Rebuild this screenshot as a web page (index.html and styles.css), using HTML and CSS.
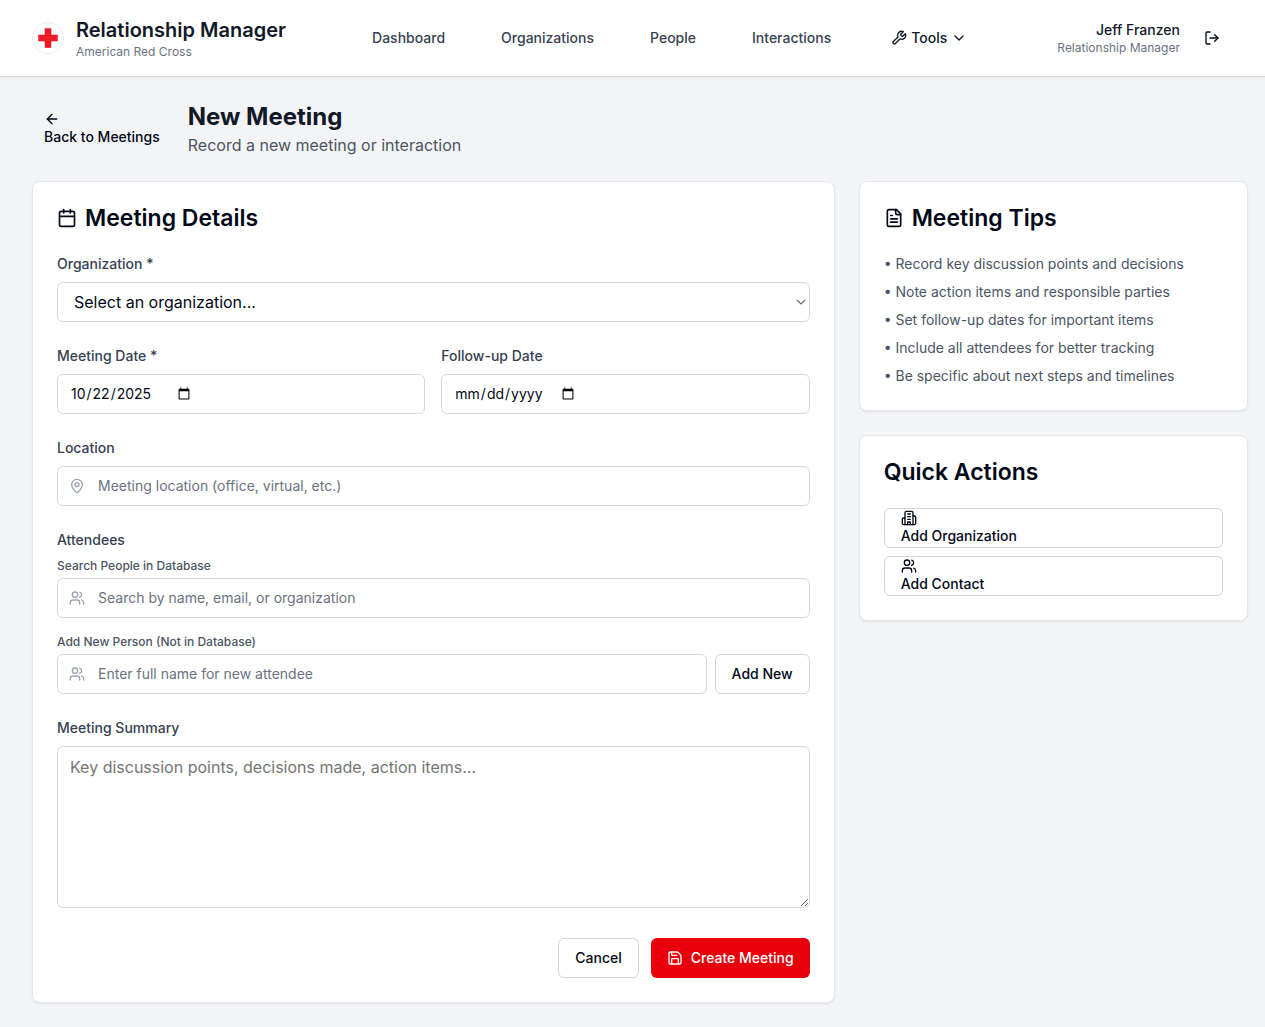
FILE: index.html
```html
<!DOCTYPE html>
<html lang="en">
<head>
<meta charset="utf-8">
<meta name="viewport" content="width=device-width, initial-scale=1">
<title>New Meeting - Relationship Manager</title>
<link rel="stylesheet" href="styles.css">
</head>
<body>
<svg class="sprite" aria-hidden="true">
  <symbol id="users" viewBox="0 0 24 24"><path d="M16 21v-2a4 4 0 0 0-4-4H6a4 4 0 0 0-4 4v2"/><circle cx="9" cy="7" r="4"/><path d="M22 21v-2a4 4 0 0 0-3-3.87"/><path d="M16 3.13a4 4 0 0 1 0 7.75"/></symbol>
</svg>

<header class="topbar">
  <div class="brand">
    <svg class="logo" viewBox="0 0 32 32" aria-hidden="true"><circle cx="16" cy="16" r="15.5" fill="#fff" stroke="#ececee"/><path fill="#ed1b24" d="M12.7 6.3h6.6v6.4h6.4v6.6h-6.4v6.4h-6.6v-6.4H6.3v-6.6h6.4z"/></svg>
    <div>
      <div class="brand-name">Relationship Manager</div>
      <div class="caption">American Red Cross</div>
    </div>
  </div>
  <nav class="nav">
    <a class="nav-link" href="#">Dashboard</a>
    <a class="nav-link" href="#">Organizations</a>
    <a class="nav-link" href="#">People</a>
    <a class="nav-link" href="#">Interactions</a>
    <button class="tools" type="button">
      <svg class="icon" viewBox="0 0 24 24"><path d="M14.7 6.3a1 1 0 0 0 0 1.4l1.6 1.6a1 1 0 0 0 1.4 0l3.77-3.77a6 6 0 0 1-7.94 7.94l-6.91 6.91a2.12 2.12 0 0 1-3-3l6.91-6.91a6 6 0 0 1 7.94-7.94l-3.76 3.76z"/></svg>
      <span>Tools</span>
      <svg class="icon" viewBox="0 0 24 24"><path d="m6 9 6 6 6-6"/></svg>
    </button>
  </nav>
  <div class="account">
    <div class="account-text">
      <div class="account-name">Jeff Franzen</div>
      <div class="caption">Relationship Manager</div>
    </div>
    <button class="logout" type="button" aria-label="Log out">
      <svg class="icon" viewBox="0 0 24 24"><path d="M9 21H5a2 2 0 0 1-2-2V5a2 2 0 0 1 2-2h4"/><path d="m16 17 5-5-5-5"/><path d="M21 12H9"/></svg>
    </button>
  </div>
</header>

<main class="page">
  <div class="page-head">
    <a class="back" href="#">
      <svg class="icon" viewBox="0 0 24 24"><path d="m12 19-7-7 7-7"/><path d="M19 12H5"/></svg>
      <span>Back to Meetings</span>
    </a>
    <div>
      <h1 class="page-title">New Meeting</h1>
      <p class="page-sub">Record a new meeting or interaction</p>
    </div>
  </div>

  <div class="columns">
    <section class="card">
      <h2 class="card-title">
        <svg class="icon icon-lg" viewBox="0 0 24 24"><path d="M8 2v4"/><path d="M16 2v4"/><rect width="18" height="18" x="3" y="4" rx="2"/><path d="M3 10h18"/></svg>
        Meeting Details
      </h2>
      <form class="form">
        <div class="field">
          <label class="label" for="org">Organization *</label>
          <div class="select-wrap">
            <select class="control select" id="org"><option>Select an organization...</option></select>
            <svg class="select-arrow" viewBox="0 0 10 6" aria-hidden="true"><path d="m1 1 4 4 4-4"/></svg>
          </div>
        </div>
        <div class="pair">
          <div class="field">
            <label class="label" for="date">Meeting Date *</label>
            <input class="control date" type="date" id="date" value="2025-10-22">
          </div>
          <div class="field">
            <label class="label" for="follow">Follow-up Date</label>
            <input class="control date" type="date" id="follow">
          </div>
        </div>
        <div class="field">
          <label class="label" for="location">Location</label>
          <div class="with-icon">
            <svg class="icon" viewBox="0 0 24 24"><path d="M20 10c0 4.993-5.539 10.193-7.399 11.799a1 1 0 0 1-1.202 0C9.539 20.193 4 14.993 4 10a8 8 0 0 1 16 0"/><circle cx="12" cy="10" r="3"/></svg>
            <input class="control" type="text" id="location" placeholder="Meeting location (office, virtual, etc.)">
          </div>
        </div>
        <fieldset class="attendees">
          <legend class="label">Attendees</legend>
          <div class="subfield">
            <label class="sublabel" for="search">Search People in Database</label>
            <div class="with-icon">
              <svg class="icon"><use href="#users"/></svg>
              <input class="control" type="text" id="search" placeholder="Search by name, email, or organization">
            </div>
          </div>
          <div class="subfield">
            <label class="sublabel" for="person">Add New Person (Not in Database)</label>
            <div class="add-row">
              <div class="with-icon">
                <svg class="icon"><use href="#users"/></svg>
                <input class="control" type="text" id="person" placeholder="Enter full name for new attendee">
              </div>
              <button class="btn" type="button">Add New</button>
            </div>
          </div>
        </fieldset>
        <div class="field">
          <label class="label" for="summary">Meeting Summary</label>
          <textarea class="summary" id="summary" rows="6" placeholder="Key discussion points, decisions made, action items..."></textarea>
        </div>
        <div class="actions">
          <button class="btn" type="button">Cancel</button>
          <button class="btn btn-primary" type="submit">
            <svg class="icon" viewBox="0 0 24 24"><path d="M15.2 3a2 2 0 0 1 1.4.6l3.8 3.8a2 2 0 0 1 .6 1.4V19a2 2 0 0 1-2 2H5a2 2 0 0 1-2-2V5a2 2 0 0 1 2-2z"/><path d="M17 21v-7a1 1 0 0 0-1-1H8a1 1 0 0 0-1 1v7"/><path d="M7 3v4a1 1 0 0 0 1 1h7"/></svg>
            Create Meeting
          </button>
        </div>
      </form>
    </section>

    <aside class="side">
      <section class="card">
        <h2 class="card-title">
          <svg class="icon icon-lg" viewBox="0 0 24 24"><path d="M15 2H6a2 2 0 0 0-2 2v16a2 2 0 0 0 2 2h12a2 2 0 0 0 2-2V7Z"/><path d="M14 2v4a2 2 0 0 0 2 2h4"/><path d="M10 9H8"/><path d="M16 13H8"/><path d="M16 17H8"/></svg>
          Meeting Tips
        </h2>
        <ul class="tips">
          <li>• Record key discussion points and decisions</li>
          <li>• Note action items and responsible parties</li>
          <li>• Set follow-up dates for important items</li>
          <li>• Include all attendees for better tracking</li>
          <li>• Be specific about next steps and timelines</li>
        </ul>
      </section>
      <section class="card">
        <h2 class="card-title">Quick Actions</h2>
        <div class="quick">
          <button class="quick-btn" type="button">
            <svg class="icon" viewBox="0 0 24 24"><path d="M6 22V4a2 2 0 0 1 2-2h8a2 2 0 0 1 2 2v18Z"/><path d="M6 12H4a2 2 0 0 0-2 2v6a2 2 0 0 0 2 2h2"/><path d="M18 9h2a2 2 0 0 1 2 2v9a2 2 0 0 1-2 2h-2"/><path d="M10 6h4"/><path d="M10 10h4"/><path d="M10 14h4"/><path d="M10 22v-4h4v4"/></svg>
            <span>Add Organization</span>
          </button>
          <button class="quick-btn" type="button">
            <svg class="icon"><use href="#users"/></svg>
            <span>Add Contact</span>
          </button>
        </div>
      </section>
    </aside>
  </div>
</main>
</body>
</html>
```
FILE: styles.css
```css
*, *::before, *::after { box-sizing: border-box; }

body {
  margin: 0;
  background: #f3f4f6;
  color: #020817;
  font: 14px/20px Inter, "Liberation Sans", sans-serif;
}

h1, h2, p, ul { margin: 0; padding: 0; }
a { color: inherit; text-decoration: none; }
button, input, select, textarea { font: inherit; color: inherit; margin: 0; }
button { cursor: pointer; }

.sprite { display: none; }

.icon {
  display: block;
  flex: none;
  width: 16px;
  height: 16px;
  fill: none;
  stroke: currentColor;
  stroke-width: 2;
  stroke-linecap: round;
  stroke-linejoin: round;
}
.icon-lg { width: 20px; height: 20px; }

/* Top bar */
.topbar {
  display: flex;
  align-items: center;
  justify-content: space-between;
  padding: 16px 33px 16px 32px;
  background: #fff;
  border-bottom: 1px solid #d9dce1;
  box-shadow: 0 1px 2px rgba(0, 0, 0, 0.06);
}
.brand { display: flex; align-items: center; gap: 12px; }
.logo { display: block; width: 32px; height: 32px; }
.brand-name { font-size: 20px; line-height: 28px; font-weight: 600; color: #111827; }
.caption { font-size: 12px; line-height: 16px; color: #6b7280; }

.nav { display: flex; align-items: center; gap: 32px; font-weight: 500; }
.nav-link { padding: 8px 12px; color: #374151; }
.tools {
  display: flex;
  align-items: center;
  gap: 4px;
  padding: 0 16px;
  border: 0;
  background: none;
  color: #111827;
}

.account { display: flex; align-items: center; gap: 12px; }
.account-text { text-align: right; }
.account-name { font-weight: 500; color: #111827; }
.logout { padding: 12px; border: 0; background: none; }

/* Page heading */
.page { padding: 24px 17px 24px 32px; }
.page-head { display: flex; align-items: center; gap: 16px; margin-bottom: 24px; }
.back { padding: 0 12px; font-weight: 500; }
.page-title { font-size: 24px; line-height: 32px; font-weight: 700; color: #111827; }
.page-sub { font-size: 16px; line-height: 24px; color: #4b5563; }

/* Cards */
.columns { display: grid; grid-template-columns: repeat(3, minmax(0, 1fr)); gap: 24px; align-items: start; }
.columns > .card { grid-column: span 2; }
.side { display: grid; gap: 24px; }
.card {
  padding: 24px;
  background: #fff;
  border: 1px solid #e5e7eb;
  border-radius: 8px;
  box-shadow: 0 1px 2px rgba(0, 0, 0, 0.08);
}
.card-title {
  display: flex;
  align-items: center;
  gap: 8px;
  margin-bottom: 24px;
  font-size: 23px;
  line-height: 24px;
  font-weight: 600;
}

/* Form */
.form { display: grid; gap: 24px; }
.field { display: grid; gap: 8px; }
.pair { display: grid; grid-template-columns: 1fr 1fr; gap: 16px; }
.label { padding: 0; font-weight: 500; color: #374151; }
.sublabel { font-size: 12px; line-height: 16px; font-weight: 500; color: #4b5563; }
.subfield { display: grid; gap: 4px; }

.control, .summary {
  display: flex;
  width: 100%;
  background: #fff;
  border: 1px solid #d5d8df;
  border-radius: 6px;
  padding: 8px 12px;
}
.control { height: 40px; }
.control::placeholder { color: #6b7280; opacity: 1; }
.date::-webkit-calendar-picker-indicator { margin-left: -3px; }

.select-wrap { position: relative; }
.select { appearance: none; font-size: 16px; line-height: 24px; padding: 0 16px; }
.select-arrow {
  position: absolute;
  right: 4px;
  top: 17px;
  width: 10px;
  height: 6px;
  fill: none;
  stroke: #6b6b70;
  stroke-width: 1.2;
  pointer-events: none;
}

.with-icon { position: relative; flex: 1; }
.with-icon .icon { position: absolute; left: 12px; top: 12px; color: #9ca3af; }
.with-icon .control { padding: 7px 12px 9px 40px; }

.attendees { border: 0; margin: 0; padding: 0; min-width: 0; }
.attendees .subfield { margin-top: 8px; }
.attendees .subfield + .subfield { margin-top: 16px; }
.add-row { display: flex; gap: 8px; }

.summary { font-size: 16px; line-height: 24px; resize: vertical; }
.summary::placeholder { color: #757575; }

.actions { display: flex; justify-content: flex-end; gap: 12px; padding-top: 6px; }
.btn {
  display: flex;
  align-items: center;
  gap: 8px;
  height: 40px;
  padding: 0 16px;
  background: #fff;
  border: 1px solid #d1d5db;
  border-radius: 6px;
  font-weight: 500;
}
.btn-primary { background: #e7000b; border: 0; color: #fff; }

/* Sidebar */
.tips { display: grid; gap: 8px; list-style: none; color: #4b5563; }
.quick { display: grid; gap: 8px; }
.quick-btn {
  display: block;
  padding: 1px 16px;
  background: #fff;
  border: 1px solid #d1d5db;
  border-radius: 6px;
  font-weight: 500;
  text-align: left;
}

@media (max-width: 900px) {
  .columns { grid-template-columns: minmax(0, 1fr); }
  .columns > .card { grid-column: auto; }
  .topbar { flex-wrap: wrap; gap: 16px; }
  .nav { flex-wrap: wrap; gap: 8px; }
}
```
